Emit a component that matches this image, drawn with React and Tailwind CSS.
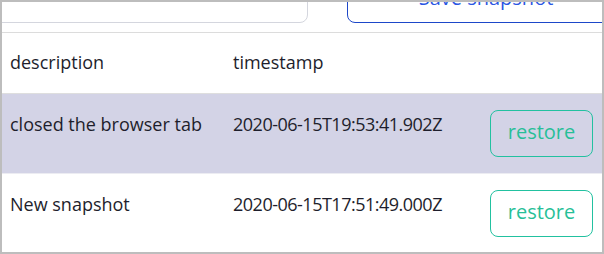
import React from 'react';

const snapshots = [
    { description: 'closed the browser tab', timestamp: '2020-06-15T19:53:41.902Z', active: true },
    { description: 'New snapshot', timestamp: '2020-06-15T17:51:49.000Z', active: false },
];

export default function App() {
    return (
        <div className="w-[604px] h-[254px] border-2 border-[#bdbdbd] overflow-hidden bg-white font-['Open_Sans',sans-serif] text-[#1e1e2c]">
            {/* Snapshot controls (scrolled partly out of view) */}
            <div className="flex items-start h-[31px] border-b border-[#dcdcdc]">
                <div className="shrink-0 -ml-[20px] -mt-[27px] w-[326px] h-[48px] rounded-lg border border-[#d4d6de] bg-white"></div>
                <button className="shrink-0 ml-[39px] -mt-[27px] w-[278px] h-[48px] pb-[3px] rounded-lg border border-[#1d47c9] bg-white text-[20px] text-[#2a55e3] flex items-center justify-center">
                    Save snapshot
                </button>
            </div>

            {/* Table header */}
            <div className="flex h-[61px] pt-[17px] pl-2 border-b border-[#dedede] text-[18px] leading-6">
                <div className="w-[223px]">description</div>
                <div>timestamp</div>
            </div>

            {/* Rows */}
            {snapshots.map((snap, i) => (
                <div
                    key={i}
                    className={`flex items-start h-[80px] pt-4 pl-2 border-b border-[#ececf2] text-[18px] leading-6 ${snap.active ? 'bg-[#d3d3e6]' : 'bg-white'}`}
                >
                    <div className="w-[223px] pt-[2px]">{snap.description}</div>
                    <div className="w-[257px] pt-[2px] tracking-[-0.5px]">{snap.timestamp}</div>
                    <button className="w-[103px] h-[47px] pb-1 rounded-lg border border-[#22c1a0] text-[20px] leading-7 text-[#27bf98] flex items-center justify-center">
                        restore
                    </button>
                </div>
            ))}
        </div>
    );
}
